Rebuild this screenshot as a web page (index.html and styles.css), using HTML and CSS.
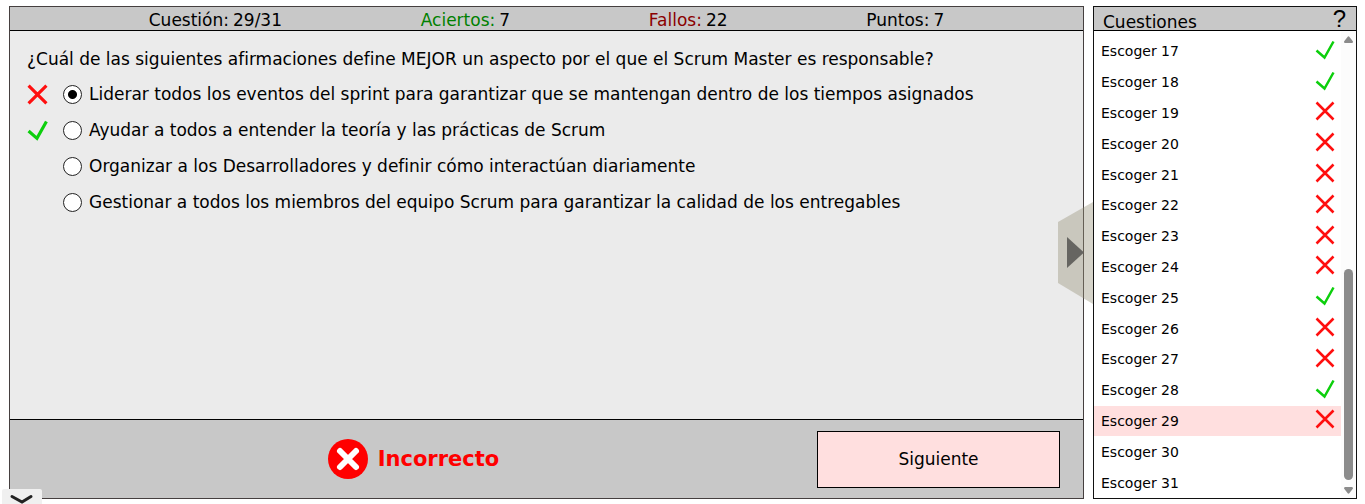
FILE: index.html
```html
<!DOCTYPE html>
<html lang="es">
<head>
<meta charset="utf-8">
<title>Cuestionario Scrum</title>
<link rel="stylesheet" href="styles.css">
</head>
<body>
<svg class="defs" aria-hidden="true">
  <symbol id="cross" viewBox="0 0 20 20"><path d="M1.500 1.500 18.500 18.500M18.500 1.500 1.500 18.500"/></symbol>
  <symbol id="check" viewBox="0 0 20 20"><path d="M1.500 10.500 9.500 17.500 18.500 1.500"/></symbol>
</svg>
<div class="app">
  <main class="quiz">
    <header class="stats">
      <span class="stat">Cuestión: <span>29/31</span></span>
      <span class="stat"><span class="good">Aciertos:</span> <span>7</span></span>
      <span class="stat"><span class="bad">Fallos:</span> <span>22</span></span>
      <span class="stat">Puntos: <span>7</span></span>
    </header>
    <fieldset class="question">
      <legend class="prompt">¿Cuál de las siguientes afirmaciones define MEJOR un aspecto por el que el Scrum Master es responsable?</legend>
      <div class="answer"><svg class="mark cross"><use href="#cross"/></svg><input type="radio" name="r" id="a1" checked><label for="a1">Liderar todos los eventos del sprint para garantizar que se mantengan dentro de los tiempos asignados</label></div>
      <div class="answer"><svg class="mark check"><use href="#check"/></svg><input type="radio" name="r" id="a2"><label for="a2">Ayudar a todos a entender la teoría y las prácticas de Scrum</label></div>
      <div class="answer"><span class="mark"></span><input type="radio" name="r" id="a3"><label for="a3">Organizar a los Desarrolladores y definir cómo interactúan diariamente</label></div>
      <div class="answer"><span class="mark"></span><input type="radio" name="r" id="a4"><label for="a4">Gestionar a todos los miembros del equipo Scrum para garantizar la calidad de los entregables</label></div>
    </fieldset>
    <footer class="actions">
      <div class="result">
        <svg class="result-icon" viewBox="0 0 40 40"><circle cx="20" cy="20" r="20"/><path d="M12 12 28 28M28 12 12 28"/></svg>
        <strong>Incorrecto</strong>
      </div>
      <button class="next" type="button">Siguiente</button>
    </footer>
    <button class="collapse" type="button" aria-label="Ocultar cuestiones">
      <svg viewBox="0 0 35 102"><path class="tab" d="M0 20 35 0V102L0 81Z"/><path class="arrow" d="M9 35 26 50.500 9 66Z"/></svg>
    </button>
  </main>
  <aside class="panel">
    <header class="panel-head"><h2>Cuestiones</h2><button class="help" type="button">?</button></header>
    <div class="panel-body">
      <ul class="list">
        <li><a href="#">Escoger 17</a><svg class="mini check"><use href="#check"/></svg></li>
        <li><a href="#">Escoger 18</a><svg class="mini check"><use href="#check"/></svg></li>
        <li><a href="#">Escoger 19</a><svg class="mini cross"><use href="#cross"/></svg></li>
        <li><a href="#">Escoger 20</a><svg class="mini cross"><use href="#cross"/></svg></li>
        <li><a href="#">Escoger 21</a><svg class="mini cross"><use href="#cross"/></svg></li>
        <li><a href="#">Escoger 22</a><svg class="mini cross"><use href="#cross"/></svg></li>
        <li><a href="#">Escoger 23</a><svg class="mini cross"><use href="#cross"/></svg></li>
        <li><a href="#">Escoger 24</a><svg class="mini cross"><use href="#cross"/></svg></li>
        <li><a href="#">Escoger 25</a><svg class="mini check"><use href="#check"/></svg></li>
        <li><a href="#">Escoger 26</a><svg class="mini cross"><use href="#cross"/></svg></li>
        <li><a href="#">Escoger 27</a><svg class="mini cross"><use href="#cross"/></svg></li>
        <li><a href="#">Escoger 28</a><svg class="mini check"><use href="#check"/></svg></li>
        <li class="current"><a href="#">Escoger 29</a><svg class="mini cross"><use href="#cross"/></svg></li>
        <li><a href="#">Escoger 30</a></li>
        <li><a href="#">Escoger 31</a></li>
      </ul>
      <div class="scrollbar" aria-hidden="true">
        <svg class="scroll-arrow" viewBox="0 0 9 7"><path d="M3.500 1Q4.500-.5 5.500 1L9 5.500Q9 7 8 7H1Q0 7 0 5.500Z"/></svg>
        <div class="track"><div class="thumb"></div></div>
        <svg class="scroll-arrow" viewBox="0 0 9 7"><path d="M3.500 6Q4.500 7.500 5.500 6L9 1.500Q9 0 8 0H1Q0 0 0 1.500Z"/></svg>
      </div>
    </div>
  </aside>
</div>
<button class="drawer" type="button" aria-label="Mostrar menú"><svg viewBox="0 0 40 15"><path d="M10 7.500 20 13 29 7.500"/></svg></button>
</body>
</html>
```

FILE: styles.css
```css
* { box-sizing: border-box; }
body {
  margin: 0;
  background: #fff;
  color: #000;
  font: 17px/20px Verdana, "DejaVu Sans", sans-serif;
}
button { font: inherit; color: inherit; cursor: pointer; }
.defs { position: absolute; width: 0; height: 0; }
.app {
  display: grid;
  grid-template-columns: 1fr 264px;
  gap: 9px;
  min-height: 100vh;
  padding: 6px 8px 5px 9px;
}
.quiz {
  position: relative;
  display: flex;
  flex-direction: column;
  border: 1px solid #453f3f;
  background: #ebebeb;
}
.stats {
  display: flex;
  justify-content: space-evenly;
  height: 24px;
  padding-top: 3px;
  background: #c8c8c8;
  border-bottom: 1px solid #000;
}
.stat { display: flex; gap: 4px; }
.good { color: #008000; }
.bad { color: #8b0000; }
.question {
  flex: 1;
  min-width: 0;
  margin: 0;
  padding: 18px 17px;
  border: 0;
}
.prompt { float: left; width: 100%; padding: 0; margin-bottom: 7px; }
.answer {
  clear: both;
  display: flex;
  align-items: center;
  min-height: 36px;
}
.mark { flex: none; width: 21px; height: 21px; margin-right: 15px; }
.cross, .check { fill: none; stroke: #ff0f0f; stroke-width: 2.5; }
.check { stroke: #0ccf0c; }
.mark.cross, .mark.check { stroke-width: 3; }
.answer input {
  appearance: none;
  flex: none;
  width: 19px;
  height: 19px;
  margin: 0 7px 0 0;
  border: 1px solid #222;
  border-radius: 50%;
  background: #fff;
}
.answer input:checked { background: radial-gradient(circle, #000 4px, #fff 5px); }
.actions {
  display: flex;
  align-items: center;
  height: 79px;
  padding-right: 23px;
  border-top: 1px solid #000;
  background: #c8c8c8;
}
.result {
  flex: 1;
  display: flex;
  align-items: center;
  justify-content: center;
  gap: 10px;
  color: #f00;
  font-size: 21px;
}
.result-icon { width: 40px; height: 40px; }
.result-icon circle { fill: #f00; }
.result-icon path { stroke: #fff; stroke-width: 6; stroke-linecap: round; }
.next {
  width: 243px;
  height: 57px;
  border: 1px solid #000;
  background: #ffdfdf;
}
.collapse {
  position: absolute;
  top: 195px;
  right: -10px;
  width: 35px;
  height: 102px;
  padding: 0;
  border: 0;
  background: none;
}
.collapse svg { display: block; width: 100%; height: 100%; }
.tab { fill: #969078; fill-opacity: .4; }
.arrow { fill: #666561; }
.panel {
  display: flex;
  flex-direction: column;
  border: 1px solid #111;
}
.panel-head {
  display: flex;
  justify-content: space-between;
  align-items: center;
  height: 24px;
  padding: 0 10px 0 9px;
  background: #c8c8c8;
  border-bottom: 1px solid #000;
}
.panel-head h2 { margin: 0; padding-top: 6px; font-size: 17px; font-weight: 400; }
.help {
  padding: 0;
  border: 0;
  background: none;
  font: 24px/24px "Liberation Sans", Arial, sans-serif;
}
.panel-body { flex: 1; display: flex; }
.list {
  flex: 1;
  display: grid;
  grid-auto-rows: 1fr;
  margin: 0;
  padding: 5px 0 0;
  list-style: none;
  font-size: 14px;
}
.list li {
  display: flex;
  align-items: center;
  justify-content: space-between;
  padding: 0 6px 0 7px;
}
.list a { color: inherit; text-decoration: none; }
.list .current { background: #ffdfdf; }
.mini { width: 20px; height: 20px; margin-bottom: 3px; }
.scrollbar {
  display: flex;
  flex-direction: column;
  align-items: center;
  width: 15px;
  padding: 5px 0 4px;
  background: #fcfcfc;
}
.scroll-arrow { width: 9px; height: 7px; fill: #8b8b8b; }
.track { flex: 1; display: flex; align-items: flex-end; padding: 7px 0; }
.thumb { width: 9px; height: 49%; min-height: 211px; border-radius: 5px; background: #8b8b8b; }
.drawer {
  position: fixed;
  left: 2px;
  bottom: 0;
  width: 40px;
  height: 15px;
  padding: 0;
  border: 0;
  border-radius: 2px 2px 0 0;
  background: #f0f0f0;
}
.drawer svg { display: block; width: 100%; height: 100%; }
.drawer path { fill: none; stroke: #222; stroke-width: 3; stroke-linecap: round; }
```
